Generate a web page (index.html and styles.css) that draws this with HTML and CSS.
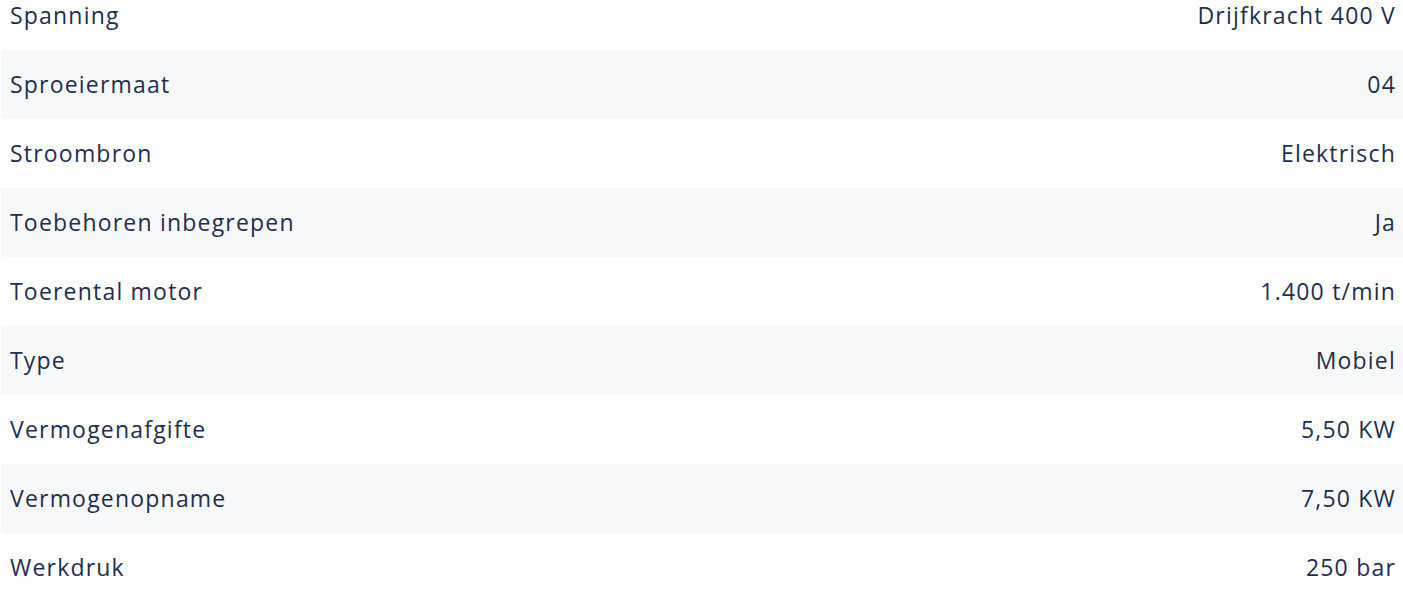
FILE: index.html
```html
<!DOCTYPE html>
<html lang="nl">
<head>
    <meta charset="UTF-8">
    <meta name="viewport" content="width=device-width, initial-scale=1.0">
    <title>Specificaties</title>
    <link rel="stylesheet" href="styles.css">
</head>
<body>
    <table class="specs">
        <tbody>
            <tr><td>Spanning</td><td class="value">Drijfkracht 400 V</td></tr>
            <tr><td>Sproeiermaat</td><td class="value">04</td></tr>
            <tr><td>Stroombron</td><td class="value">Elektrisch</td></tr>
            <tr><td>Toebehoren inbegrepen</td><td class="value">Ja</td></tr>
            <tr><td>Toerental motor</td><td class="value">1.400 t/min</td></tr>
            <tr><td>Type</td><td class="value">Mobiel</td></tr>
            <tr><td>Vermogenafgifte</td><td class="value">5,50 KW</td></tr>
            <tr><td>Vermogenopname</td><td class="value">7,50 KW</td></tr>
            <tr><td>Werkdruk</td><td class="value">250 bar</td></tr>
        </tbody>
    </table>
</body>
</html>
```
FILE: styles.css
```css
body {
    margin: 0;
    background: #fff;
    font-family: "Open Sans", Arial, sans-serif;
    color: #1e2e4f;
}
.specs {
    width: calc(100% - 1px);
    margin: -19px 0 0 1px;
    border-collapse: collapse;
    font-size: 23px;
    letter-spacing: 1.2px;
}
.specs td {
    height: 69px;
    padding: 0 7px 2px 9px;
    vertical-align: middle;
    box-sizing: border-box;
}
.specs tr:nth-child(even) td {
    background-color: #f7f8fa;
}
.specs .value {
    text-align: right;
}
```
